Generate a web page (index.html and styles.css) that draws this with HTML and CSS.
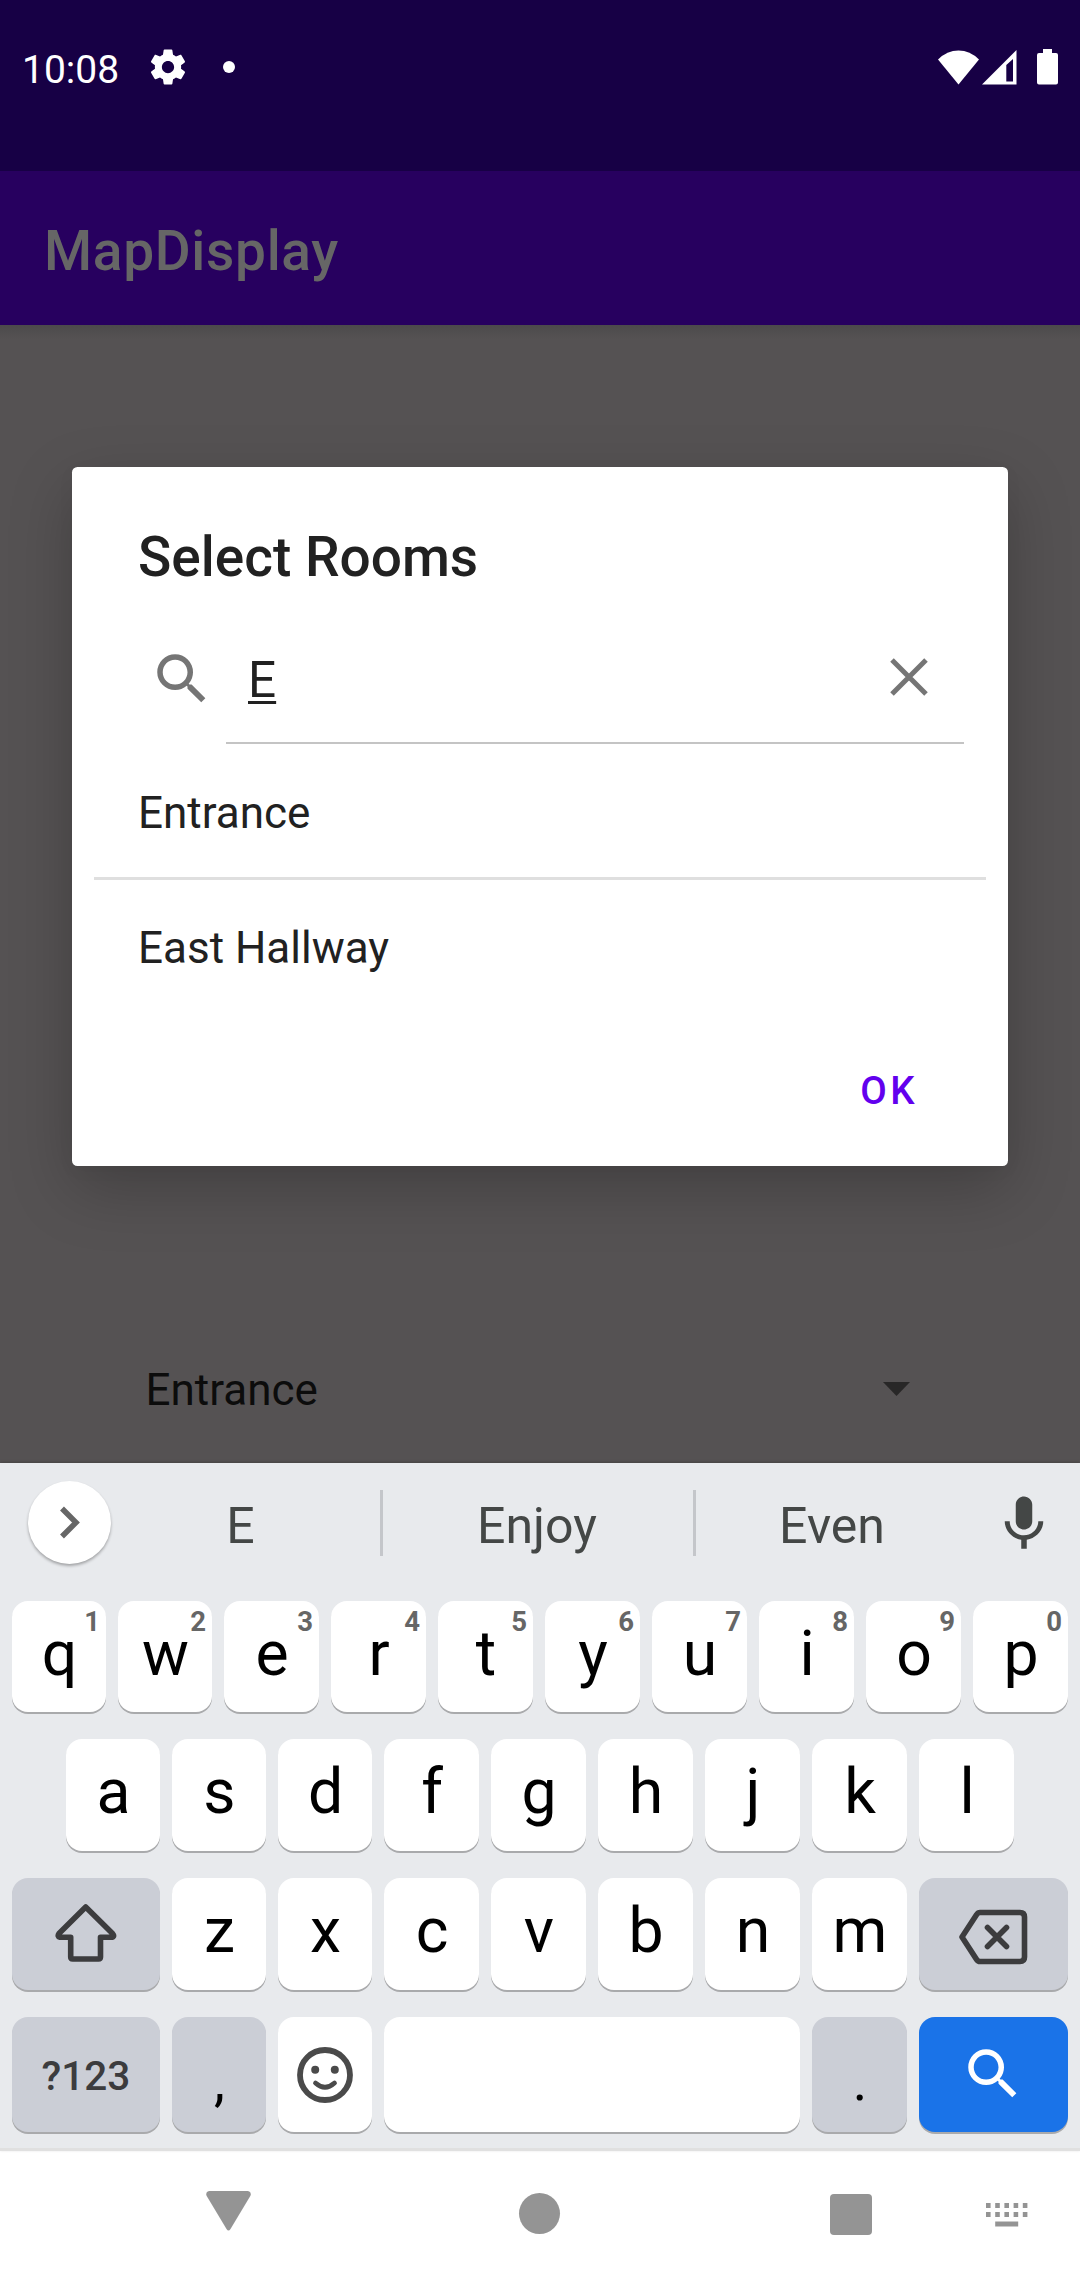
FILE: index.html
```html
<!DOCTYPE html>
<html lang="en">
<head>
<meta charset="utf-8">
<title>MapDisplay</title>
<link rel="stylesheet" href="styles.css">
</head>
<body>
<header class="status">
  <span class="clock">10:08</span>
  <svg class="gear" width="42" height="42" viewBox="0 0 24 24"><path fill="#fff" fill-rule="evenodd" d="M19.43 12.98c.04-.32.07-.64.07-.98s-.03-.66-.07-.98l2.110-1.650c.19-.15.24-.42.12-.64l-2-3.460c-.12-.22-.39-.3-.61-.22l-2.490 1c-.52-.4-1.080-.73-1.690-.98l-.38-2.650C14.460 2.180 14.250 2 14 2h-4c-.25 0-.46.18-.49.42l-.38 2.650c-.61.25-1.170.59-1.690.98l-2.490-1c-.23-.09-.49 0-.61.22l-2 3.460c-.13.22-.07.49.12.64l2.110 1.650c-.04.32-.07.65-.07.98s.03.66.07.98l-2.110 1.650c-.19.15-.24.42-.12.64l2 3.460c.12.22.39.3.61.22l2.490-1c.52.4 1.080.73 1.690.98l.38 2.650c.03.24.24.42.49.42h4c.25 0 .46-.18.49-.42l.38-2.650c.61-.25 1.170-.59 1.690-.98l2.490 1c.23.09.49 0 .61-.22l2-3.460c.12-.22.07-.49-.12-.64l-2.110-1.650zM12 15.500c-1.930 0-3.500-1.570-3.500-3.500s1.570-3.500 3.500-3.500 3.500 1.570 3.500 3.500-1.570 3.500-3.500 3.500z"/></svg>
  <i class="more-dot"></i>
  <div class="status-icons">
    <svg width="41" height="36" viewBox="0 0 41 36"><path fill="#fff" d="M0 10.500Q9 1.500 20.500 1.500T41 10.500L20.500 35.500Z"/></svg>
    <svg class="signal" width="35" height="36" viewBox="0 0 35 36"><path fill="#fff" fill-rule="evenodd" d="M34.500 1V35.500H0ZM24.300 16V32.500H31V10Z"/></svg>
    <svg class="battery" width="21" height="36" viewBox="0 0 21 36"><path fill="#fff" d="M6 0H15V4H19Q21 4 21 6V33.500Q21 35.500 19 35.500H2Q0 35.500 0 33.500V6Q0 4 2 4H6Z"/></svg>
  </div>
</header>
<div class="toolbar">MapDisplay</div>
<main class="content">
  <div class="spinner">
    <span>Entrance</span>
    <svg width="27" height="14" viewBox="0 0 27 14"><path fill="#282727" d="M0 0H27L13.500 14Z"/></svg>
  </div>
</main>

<section class="dialog">
  <h1 class="dialog-title">Select Rooms</h1>
  <div class="search">
    <svg width="66" height="66" viewBox="0 0 24 24"><path fill="#757575" d="M15.500 14h-.79l-.28-.27A6.471 6.471 0 0 0 16 9.500 6.500 6.500 0 1 0 9.500 16c1.610 0 3.090-.59 4.230-1.570l.27.28v.79l5 4.990L20.490 19l-4.990-5zm-6 0C7.010 14 5 11.990 5 9.500S7.010 5 9.500 5 14 7.010 14 9.500 11.990 14 9.500 14z"/></svg>
    <div class="search-plate">
      <span class="query">E</span>
      <svg class="clear" width="38" height="38" viewBox="0 0 38 38"><path stroke="#757575" stroke-width="5" d="M2 2L36 36M36 2L2 36"/></svg>
    </div>
  </div>
  <ul class="rooms">
    <li>Entrance</li>
    <li class="rule"></li>
    <li>East Hallway</li>
  </ul>
  <div class="actions"><button class="ok">OK</button></div>
</section>

<section class="keyboard">
  <div class="suggestions">
    <div class="expand"><svg width="20" height="33" viewBox="0 0 20 33"><path fill="none" stroke="#666" stroke-width="5.500" d="M2 2.500L16 16.500L2 30.500"/></svg></div>
    <span class="word first">E</span>
    <i class="bar"></i>
    <span class="word second">Enjoy</span>
    <i class="bar"></i>
    <span class="word third">Even</span>
    <svg class="mic" width="66" height="66" viewBox="0 0 24 24"><path fill="#444746" d="M12 14c1.660 0 3-1.340 3-3V5c0-1.660-1.340-3-3-3S9 3.340 9 5v6c0 1.660 1.340 3 3 3zm5.200-3c0 2.900-2.400 5.100-5.200 5.100S6.800 13.900 6.800 11H5c0 3.410 2.720 6.230 6 6.720V21h2v-3.280c3.280-.48 6-3.300 6-6.720h-1.800z"/></svg>
  </div>
  <div class="row row-1">
    <div class="key">q<sup>1</sup></div><div class="key">w<sup>2</sup></div><div class="key">e<sup>3</sup></div><div class="key">r<sup>4</sup></div><div class="key">t<sup>5</sup></div><div class="key">y<sup>6</sup></div><div class="key">u<sup>7</sup></div><div class="key">i<sup>8</sup></div><div class="key">o<sup>9</sup></div><div class="key">p<sup>0</sup></div>
  </div>
  <div class="row row-2">
    <div class="key">a</div><div class="key">s</div><div class="key">d</div><div class="key">f</div><div class="key">g</div><div class="key">h</div><div class="key">j</div><div class="key">k</div><div class="key">l</div>
  </div>
  <div class="row row-3">
    <div class="key gray icon"><svg class="shift" width="62" height="60" viewBox="0 0 62 60"><path fill="none" stroke="#3c3c3e" stroke-width="5.600" stroke-linejoin="round" d="M45.500 34.300H57Q60 33.500 57.500 30.500L30.700 4L4 30.500Q2 33.500 5 34.300H15.700V54Q15.700 56 17.700 56H43.500Q45.500 56 45.500 54Z"/></svg></div>
    <div class="key">z</div><div class="key">x</div><div class="key">c</div><div class="key">v</div><div class="key">b</div><div class="key">n</div><div class="key">m</div>
    <div class="key gray icon"><svg class="backspace" width="70" height="56" viewBox="0 0 70 56"><path fill="none" stroke="#3c3c3e" stroke-width="5.600" stroke-linejoin="round" d="M22 3.500H62Q66.500 3.500 66.500 8V48Q66.500 52.500 62 52.500H22Q20 52.500 18.500 50.300L4 28L18.500 5.700Q20 3.500 22 3.500Z"/><path stroke="#3c3c3e" stroke-width="5.600" stroke-linecap="round" d="M29.500 18.500L48.500 37.500M48.500 18.500L29.500 37.500"/></svg></div>
  </div>
  <div class="row row-4">
    <div class="key gray symbols">?123</div>
    <div class="key gray punct">,</div>
    <div class="key icon"><svg width="56" height="56" viewBox="0 0 56 56"><circle cx="28" cy="28" r="25" fill="none" stroke="#4a4a4a" stroke-width="5.800"/><circle cx="18.200" cy="22.700" r="4" fill="#4a4a4a"/><circle cx="37.800" cy="22.700" r="4" fill="#4a4a4a"/><path fill="none" stroke="#4a4a4a" stroke-width="4.800" stroke-linecap="round" d="M18.500 36Q28 44.500 37.500 36"/></svg></div>
    <div class="key"></div>
    <div class="key gray punct">.</div>
    <div class="key go icon"><svg width="66" height="66" viewBox="0 0 24 24"><path fill="#fff" d="M15.500 14h-.79l-.28-.27A6.471 6.471 0 0 0 16 9.500 6.500 6.500 0 1 0 9.500 16c1.610 0 3.090-.59 4.230-1.570l.27.28v.79l5 4.990L20.490 19l-4.990-5zm-6 0C7.010 14 5 11.990 5 9.500S7.010 5 9.500 5 14 7.010 14 9.500 11.990 14 9.500 14z"/></svg></div>
  </div>
</section>

<nav class="nav">
  <svg class="back" width="45" height="40" viewBox="0 0 45 40"><path fill="#949494" d="M3 0H42Q46 1 44.300 5L24.500 38Q22.500 41 20.500 38L.7 5Q-1 1 3 0Z"/></svg>
  <i class="home"></i>
  <i class="recent"></i>
  <svg class="ime" width="42" height="24" viewBox="0 0 42 24"><path stroke="#949494" stroke-width="5" stroke-dasharray="4.600 4.600" d="M0 2.500H42M0 11.500H42"/><path fill="#949494" d="M9.200 18.500H32.200V23.500H9.200Z"/></svg>
</nav>
</body>
</html>
```
FILE: styles.css
```css
* { box-sizing: border-box; }
body {
  margin: 0;
  width: 1080px;
  height: 2280px;
  position: relative;
  display: flex;
  flex-direction: column;
  overflow: hidden;
  font-family: Roboto, "Liberation Sans", sans-serif;
  background: #fff;
}
svg { display: block; flex: none; }

.status {
  height: 171px;
  padding: 0 22px 37px 22px;
  display: flex;
  align-items: center;
  background: #170045;
  color: #fff;
}
.clock { font-size: 39px; line-height: 46px; padding-top: 5px; width: 96px; }
.gear { margin-left: 29px; }
.more-dot { width: 12px; height: 12px; border-radius: 50%; background: #fff; margin-left: 34px; }
.status-icons { margin-left: auto; display: flex; align-items: center; }
.signal { margin-left: 3px; }
.battery { margin-left: 20px; }

.toolbar {
  height: 154px;
  padding: 6px 44px 0;
  line-height: 148px;
  font-size: 55px;
  font-weight: 500;
  letter-spacing: .690px;
  background: #27005f;
  color: #666;
}

.content {
  height: 1138px;
  display: flex;
  align-items: flex-end;
  background: linear-gradient(#4c4a4b, #555253 14px);
}
.spinner {
  width: 100%;
  height: 146px;
  padding: 0 170px 0 145.500px;
  display: flex;
  justify-content: space-between;
  font-size: 44px;
  line-height: 146px;
  color: #0c0c0c;
}
.spinner svg { margin-top: 65px; }

.dialog {
  position: absolute;
  left: 72px;
  top: 467px;
  width: 936px;
  height: 699px;
  padding-top: 58px;
  display: flex;
  flex-direction: column;
  border-radius: 5.500px;
  background: #fff;
  color: #212121;
  box-shadow: 0 22px 64px rgba(0, 0, 0, .22), 0 4px 18px rgba(0, 0, 0, .04);
}
.dialog-title { margin: 0; padding-left: 66px; font-size: 55px; line-height: 64px; font-weight: 500; }
.search { margin-top: 24px; padding: 0 44px 0 77px; height: 132px; display: flex; align-items: center; }
.search-plate {
  flex: 1;
  height: 131px;
  margin: 0 0 1px 11px;
  padding: 0 36px 0 22px;
  display: flex;
  align-items: center;
  justify-content: space-between;
  border-bottom: 2px solid #c4c4c4;
}
.query {
  padding-top: 5px;
  font-size: 49.500px;
  line-height: 58px;
  text-decoration: underline;
  text-decoration-thickness: 2.500px;
  text-underline-offset: 4px;
}
.clear { margin-bottom: 1px; }
.rooms { list-style: none; margin: 0; padding: 0; }
.rooms li { height: 132px; padding: 4px 66px 0; font-size: 44px; line-height: 128px; }
.rooms .rule { height: 3px; margin: 0 22px; padding: 0; background: #dfdfdf; }
.actions { margin-top: 29px; padding-right: 90px; display: flex; justify-content: flex-end; }
.ok {
  padding: 0;
  border: 0;
  background: none;
  font: 500 38.500px/99px Roboto, "Liberation Sans", sans-serif;
  letter-spacing: 3.440px;
  color: #6200ee;
}

.keyboard {
  height: 688px;
  background: #e8eaed;
  border-bottom: 3px solid #e0e0e0;
  box-shadow: 0 -1px 3px rgba(0, 0, 0, .2);
  position: relative;
}
.suggestions {
  height: 138px;
  padding: 0 23px 18px 28px;
  display: flex;
  align-items: center;
  color: #444746;
  font-size: 50px;
}
.expand {
  width: 83px;
  height: 83px;
  border-radius: 50%;
  background: #fff;
  display: flex;
  align-items: center;
  justify-content: center;
  margin-bottom: 1px;
  box-shadow: 0 2px 3px rgba(0, 0, 0, .3);
}
.word { text-align: center; padding: 6px 2px 0 0; line-height: 60px; }
.first { width: 269px; padding-right: 10px; }
.second { width: 310px; }
.third { width: 274px; }
.bar { width: 3px; height: 66px; background: #c4c6ca; }
.mic { margin: 2px 0 0 21px; }

.row { display: grid; grid-template-rows: 100%; gap: 12px; padding-left: 12px; margin-bottom: 27px; }
.row-1 { height: 111px; grid-template-columns: 94px 94px repeat(8, 95px); }
.row-2 { height: 112px; grid-template-columns: repeat(3, 94px) repeat(6, 95px); padding-left: 66px; }
.row-3 { height: 112px; grid-template-columns: 148px 94px 94px repeat(5, 95px) 149px; }
.row-4 { height: 115px; grid-template-columns: 148px 94px 94px 416px 95px 149px; margin-bottom: 0; }
.key {
  position: relative;
  padding-left: 1px;
  border-radius: 16px;
  background: #fff;
  color: #000;
  text-align: center;
  font-size: 62.500px;
  line-height: 105px;
  box-shadow: 0 2px 0 #a9aaac;
}
.key sup {
  position: absolute;
  top: 0;
  right: 6px;
  font-size: 27.500px;
  line-height: 41px;
  font-weight: 700;
  color: #666;
}
.gray { background: #cbced6; }
.icon { display: flex; align-items: center; justify-content: center; padding: 0; }
.shift { margin-bottom: 2px; }
.backspace { margin: 5px 1px 0 0; }
.symbols { padding: 0; font-size: 40.500px; font-weight: 500; line-height: 118px; color: #3c3c3e; }
.punct { font-size: 55px; line-height: 128px; }
.go { background: #1a73e8; padding: 0 2px 2px 0; }

.nav { height: 129px; padding-left: 206px; display: flex; align-items: flex-start; }
.back { margin-top: 40px; }
.home { width: 41px; height: 41px; margin: 42px 0 0 268px; border-radius: 50%; background: #949494; }
.recent { width: 42px; height: 41px; margin: 43px 0 0 270px; border-radius: 4px; background: #949494; }
.ime { margin: 52px 0 0 114px; }
```
